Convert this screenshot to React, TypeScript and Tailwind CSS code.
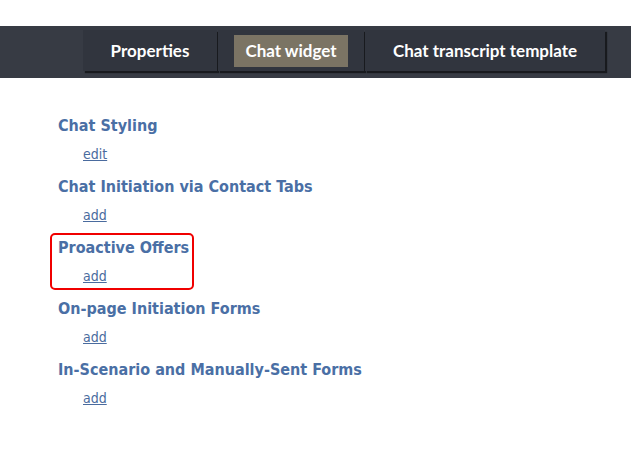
const tabs = [
  { label: "Properties", width: "w-[134px]", active: false },
  { label: "Chat widget", width: "w-[146px]", active: true },
  { label: "Chat transcript template", width: "w-[240px]", active: false },
];

const sections = [
  { title: "Chat Styling", action: "edit", highlight: false },
  { title: "Chat Initiation via Contact Tabs", action: "add", highlight: false },
  { title: "Proactive Offers", action: "add", highlight: true },
  { title: "On-page Initiation Forms", action: "add", highlight: false },
  { title: "In-Scenario and Manually-Sent Forms", action: "add", highlight: false },
];

export default function App() {
  return (
    <div className="min-h-[461px] w-[631px] bg-white pt-[26px]">
      <div className="flex h-[52px] items-start gap-px bg-[#373b44] pl-[83px] pt-[4px]">
        {tabs.map((t) => (
          <div
            key={t.label}
            className={`${t.width} flex h-[41px] items-center justify-center bg-[#31353e] shadow-[2px_2px_1px_rgba(0,0,0,0.55)]`}
          >
            <span
              className={`font-['Lato',sans-serif] text-[17px] font-bold text-white ${
                t.active ? "bg-[#7b7464] px-[11px] py-[5px] leading-[22px]" : "leading-[22px]"
              }`}
            >
              {t.label}
            </span>
          </div>
        ))}
      </div>

      <div className="pl-[58px] pt-[36px] font-['DejaVu_Sans_Condensed','DejaVu_Sans',sans-serif]">
        {sections.map((s) => (
          <div key={s.title} className="relative mb-[9px]">
            {s.highlight ? (
              <div className="absolute left-[-8px] top-[-3px] h-[57px] w-[144px] rounded-[5px] border-2 border-[#f00000]" />
            ) : null}
            <h3 className="text-[16px] font-bold leading-[24px] text-[#4a6fa5]">{s.title}</h3>
            <a
              href="#"
              className="ml-[25px] mt-[4px] block w-fit text-[14px] leading-[24px] text-[#4a6b9e] underline"
            >
              {s.action}
            </a>
          </div>
        ))}
      </div>
    </div>
  );
}
